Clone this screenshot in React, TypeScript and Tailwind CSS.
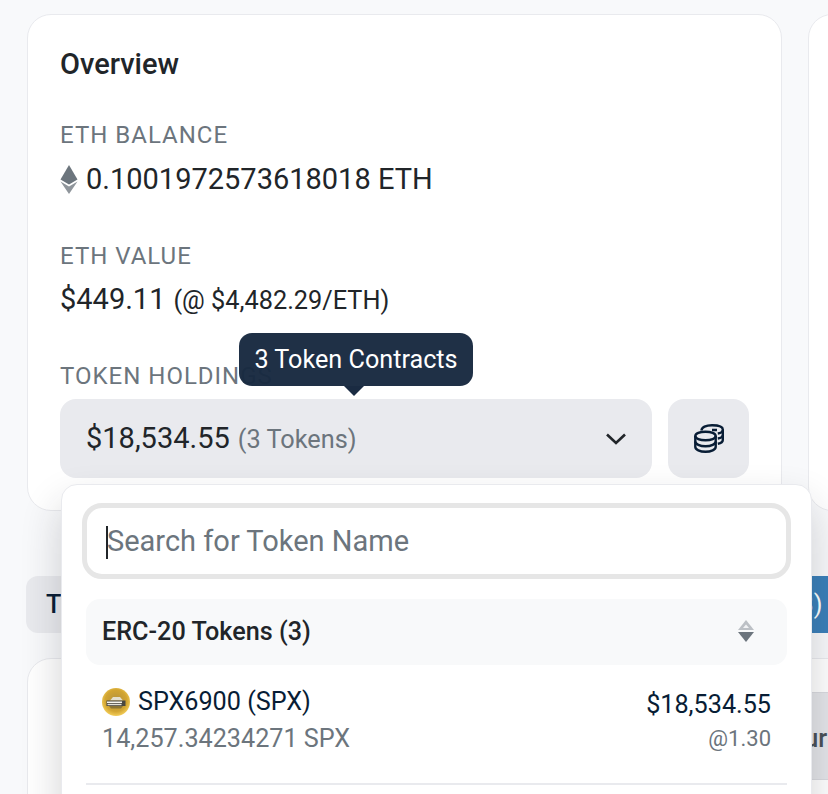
function EthIcon() {
  return (
    <svg width="18" height="29" viewBox="0 0 18 29" className="shrink-0">
      <path d="M9 0 L17.500 14.500 L9 19.500 L0.500 14.500 Z" fill="#6c757d" />
      <path d="M0.500 16.500 L9 21.500 L17.500 16.500 L9 29 Z" fill="#8f959b" />
    </svg>
  );
}

function Coins() {
  return (
    <svg width="30" height="29" viewBox="0 0 30 29" fill="none" stroke="#081d35" strokeWidth="2.400">
      <ellipse cx="11.500" cy="12" rx="10.200" ry="4.300" />
      <path d="M1.300 12V23c0 2.500 4.600 4.700 10.200 4.700s10.200-2.200 10.200-4.700V12" />
      <path d="M1.300 17.500c0 2.500 4.600 4.700 10.200 4.700s10.200-2.200 10.200-4.700" />
      <path d="M7.500 6.500C7.500 3.300 12 1.200 18 1.200s10.800 1.500 10.800 4.300V16c0 1.800-2 3.200-5 3.800" />
      <path d="M28.800 6c0 1.800-2 3-5 3.500M28.800 11c0 1.800-2 3-5 3.500M18 6h5" />
    </svg>
  );
}

function SortIcon() {
  return (
    <svg width="16" height="22" viewBox="0 0 16 22" className="mb-[2px]">
      <path d="M8 0 L16 10 H0 Z" fill="#bcc0c5" />
      <path d="M8 4.500 L11 8 H5 Z" fill="#f1f2f4" />
      <path d="M8 22 L16 12 H0 Z" fill="#6c757d" />
    </svg>
  );
}

function SpxLogo() {
  return (
    <svg width="28" height="28" viewBox="0 0 28 28" className="shrink-0">
      <defs>
        <radialGradient id="spxGold" cx="50%" cy="45%" r="55%">
          <stop offset="0%" stopColor="#b3923e" />
          <stop offset="70%" stopColor="#d2a532" />
          <stop offset="100%" stopColor="#f3cd58" />
        </radialGradient>
      </defs>
      <circle cx="14" cy="14" r="14" fill="url(#spxGold)" />
      <path d="M8 12.500 L11 9 H18 L21 12.500 Z" fill="#e3dfcf" />
      <rect x="4.500" y="12.500" width="19" height="5.500" fill="#4a4841" />
      <rect x="5" y="13.500" width="15" height="1.500" fill="#f6f4ec" />
      <rect x="5.500" y="15.800" width="14" height="1.400" fill="#e3e0d4" />
      <path d="M7 18 H21 L19 20.500 H9 Z" fill="#8a7434" />
    </svg>
  );
}

export default function App() {
  return (
    <div className="relative w-[828px] h-[794px] overflow-hidden bg-[#f8f9fb] font-['Roboto',sans-serif] text-[#212529]">
      <div className="flex gap-[26px] items-start pl-[27px] pt-[14px]">
        <div className="w-[755px] h-[497px] shrink-0 bg-white border border-[#e9eaee] rounded-[24px] px-[32px] pt-[32px]">
          <h2 className="text-[29px] leading-[34px] font-medium">Overview</h2>
          <div className="mt-[38px] text-[24px] leading-[32px] text-[#6c757d] tracking-[1px]">ETH BALANCE</div>
          <div className="mt-[8px] flex items-center gap-[8px] text-[29px] leading-[40px]">
            <EthIcon />
            <span>0.1001972573618018 ETH</span>
          </div>
          <div className="mt-[41px] text-[24px] leading-[32px] text-[#6c757d] tracking-[1px]">ETH VALUE</div>
          <div className="mt-[7px] flex items-baseline gap-[8px] text-[29px] leading-[40px]">
            <span>$449.11</span>
            <span className="text-[25.300px]">(@ $4,482.29/ETH)</span>
          </div>
          <div className="mt-[39px] text-[24px] leading-[32px] text-[#6c757d] tracking-[1px]">TOKEN HOLDINGS</div>
          <div className="mt-[7px] flex gap-[16px]">
            <div className="w-[592px] h-[79px] bg-[#e9eaee] rounded-[16px] flex items-center justify-between pl-[26px] pr-[25px]">
              <div className="flex items-baseline gap-[8px]">
                <span className="text-[29px]">$18,534.55</span>
                <span className="text-[25.300px] text-[#6c757d]">(3 Tokens)</span>
              </div>
              <svg width="22" height="14" viewBox="0 0 22 14" fill="none" stroke="#212529" strokeWidth="2.600">
                <path d="M2 2.500 L11 11 L20 2.500" />
              </svg>
            </div>
            <div className="w-[81px] h-[79px] bg-[#e9eaee] rounded-[16px] flex items-center justify-center">
              <Coins />
            </div>
          </div>
        </div>
        <div className="w-[200px] h-[497px] shrink-0 bg-white border border-[#e9eaee] rounded-[24px]" />
      </div>

      <div className="mt-[65px] flex justify-between pl-[26px]">
        <div className="w-[300px] h-[57px] bg-[#e9eaee] rounded-[12px] pl-[20px] flex items-center text-[25.200px] font-medium text-[#081d35]">Transactions</div>
        <div className="w-[60px] h-[57px] shrink-0 bg-[#3a7fb9] pl-[23px] flex items-center text-[25.200px] text-white">(3)</div>
      </div>

      <div className="mt-[25px] ml-[27px] w-[860px] h-[200px] bg-white border border-[#e9eaee] rounded-[24px] pt-[33px] pl-[740px]">
        <div className="h-[88px] bg-[#e4e5e9] border-y border-[#d9dadf] flex items-center pl-[4px] pt-[5px] text-[25.200px] font-medium text-[#495057]">Hour</div>
      </div>

      {/* tooltip */}
      <div className="absolute left-[239px] top-[333px] h-[53px] w-[234px] bg-[#182940]/[.97] rounded-[13px] flex items-center justify-center text-white text-[25.200px]">
        3 Token Contracts
        <div className="absolute left-[105px] top-[53px] w-0 h-0 border-x-[10px] border-x-transparent border-t-[10px] border-t-[#1a2b42]" />
      </div>

      {/* dropdown */}
      <div className="absolute left-[61px] top-[484px] w-[751px] h-[340px] bg-white rounded-[16px] border border-[#e9eaee] shadow-[0_20px_40px_rgba(33,37,41,0.2)] px-[20px] pt-[18px]">
        <div className="h-[76px] pt-[2px] border-[5px] border-[#e6e6e6] rounded-[20px] flex items-center pl-[19px] text-[29px] text-[#6c757d]">
          <span className="w-[2px] h-[33px] bg-[#212529] -mr-[1px]" />
          <span>Search for Token Name</span>
        </div>
        <div className="mt-[20px] mx-[4px] h-[66px] bg-[#f8f9fa] rounded-[14px] flex items-center justify-between pl-[16px] pr-[33px]">
          <span className="text-[25.200px] font-medium">ERC-20 Tokens (3)</span>
          <SortIcon />
        </div>
        <div className="mx-[4px] h-[120px] border-b-2 border-[#e9eaee] pl-[16px] pr-[16px] pt-[21px] flex justify-between">
          <div>
            <div className="flex items-center gap-[8px] text-[25.200px] leading-[32px] text-[#081d35]">
              <SpxLogo />
              <span>SPX6900 (SPX)</span>
            </div>
            <div className="mt-[4px] text-[25.200px] leading-[34px] text-[#6c757d]">14,257.34234271 SPX</div>
          </div>
          <div className="text-right pt-[3px]">
            <div className="text-[25.200px] leading-[32px] text-[#081d35]">$18,534.55</div>
            <div className="mt-[1px] text-[22px] leading-[34px] text-[#6c757d]">@1.30</div>
          </div>
        </div>
      </div>
    </div>
  );
}
